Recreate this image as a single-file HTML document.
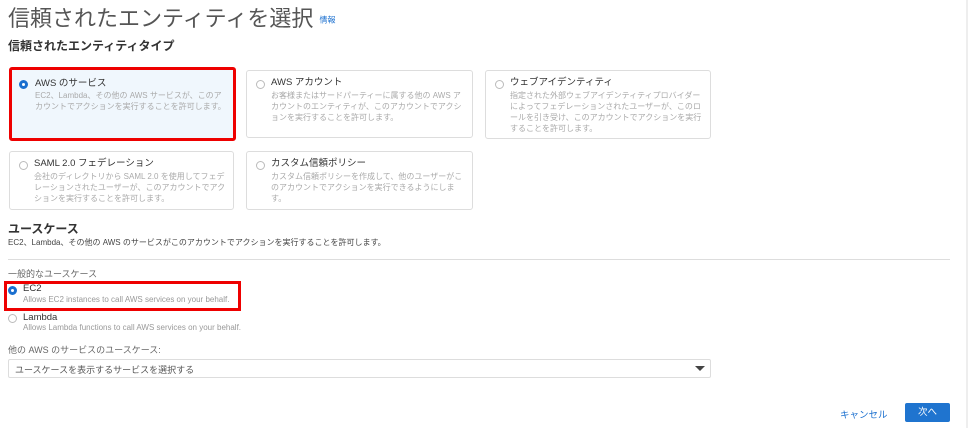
<!DOCTYPE html>
<html><head><meta charset="utf-8"><style>
*{box-sizing:border-box;margin:0;padding:0}
body{width:968px;height:428px;background:#fff;font-family:"Liberation Sans","Noto Sans CJK JP",sans-serif;color:#444;position:relative;overflow:hidden}
.a{position:absolute;white-space:nowrap}
.card{position:absolute;border:1px solid #ddd;border-radius:3px;background:#fff}
.card .r{position:absolute;left:9px;top:9px;width:9px;height:9px;border:1px solid #bbb;border-radius:50%;background:#fff}
.card .t{position:absolute;left:24px;top:6px;font-size:9.5px;line-height:12px;color:#333}
.card .d{position:absolute;left:24px;top:19px;font-size:8px;line-height:11px;color:#aaa;width:192px;white-space:normal}
.sel{border:3px solid #e00;background:#f0f7fd}
.on{border:3px solid #1a6fcf !important;background:#fff}
</style></head><body>
<div class="a" style="left:8px;top:1px;font-size:22px;color:#555">信頼されたエンティティを選択 <span style="font-size:8px;color:#1a6fcf;vertical-align:middle">情報</span></div>
<div class="a" style="left:8px;top:37px;font-size:12px;font-weight:bold;color:#333">信頼されたエンティティタイプ</div>

<div class="card sel" style="left:9px;top:67px;width:227px;height:74px"><div class="r on" style="left:7px;top:10px"></div><div class="t" style="left:23px;top:8px">AWS のサービス</div><div class="d" style="left:23px;top:20px">EC2、Lambda、その他の AWS サービスが、このアカウントでアクションを実行することを許可します。</div></div>
<div class="card" style="left:246px;top:70px;width:227px;height:68px"><div class="r"></div><div class="t">AWS アカウント</div><div class="d">お客様またはサードパーティーに属する他の AWS アカウントのエンティティが、このアカウントでアクションを実行することを許可します。</div></div>
<div class="card" style="left:485px;top:70px;width:226px;height:69px"><div class="r"></div><div class="t">ウェブアイデンティティ</div><div class="d">指定された外部ウェブアイデンティティプロバイダーによってフェデレーションされたユーザーが、このロールを引き受け、このアカウントでアクションを実行することを許可します。</div></div>
<div class="card" style="left:9px;top:151px;width:225px;height:59px"><div class="r"></div><div class="t">SAML 2.0 フェデレーション</div><div class="d">会社のディレクトリから SAML 2.0 を使用してフェデレーションされたユーザーが、このアカウントでアクションを実行することを許可します。</div></div>
<div class="card" style="left:246px;top:151px;width:227px;height:59px"><div class="r"></div><div class="t">カスタム信頼ポリシー</div><div class="d">カスタム信頼ポリシーを作成して、他のユーザーがこのアカウントでアクションを実行できるようにします。</div></div>

<div class="a" style="left:8px;top:220px;font-size:12px;font-weight:bold;color:#333">ユースケース</div>
<div class="a" style="left:8px;top:237px;font-size:8px;color:#444">EC2、Lambda、その他の AWS のサービスがこのアカウントでアクションを実行することを許可します。</div>
<div class="a" style="left:8px;top:259px;width:942px;height:1px;background:#ddd"></div>
<div class="a" style="left:8px;top:267px;font-size:9px;color:#666">一般的なユースケース</div>
<div class="a" style="left:4px;top:281px;width:237px;height:30px;border:3px solid #e00"></div>
<div class="a" style="left:8px;top:286px;width:9px;height:9px;border:3px solid #1a6fcf;border-radius:50%"></div>
<div class="a" style="left:23px;top:283px;font-size:9.5px;color:#333">EC2</div>
<div class="a" style="left:23px;top:295px;font-size:8px;color:#999">Allows EC2 instances to call AWS services on your behalf.</div>
<div class="a" style="left:8px;top:314px;width:9px;height:9px;border:1px solid #bbb;border-radius:50%"></div>
<div class="a" style="left:23px;top:312px;font-size:9.5px;color:#333">Lambda</div>
<div class="a" style="left:23px;top:323px;font-size:8px;color:#999">Allows Lambda functions to call AWS services on your behalf.</div>
<div class="a" style="left:8px;top:343px;font-size:9px;color:#666">他の AWS のサービスのユースケース:</div>
<div class="a" style="left:8px;top:359px;width:703px;height:19px;border:1px solid #ddd;border-radius:2px;font-size:9px;color:#555;padding:3px 0 0 6px">ユースケースを表示するサービスを選択する</div>
<div class="a" style="left:695px;top:366px;width:0;height:0;border-left:5px solid transparent;border-right:5px solid transparent;border-top:5px solid #444"></div>
<div class="a" style="left:840px;top:407px;font-size:9.5px;color:#1a6fcf">キャンセル</div>
<div class="a" style="left:905px;top:403px;width:45px;height:19px;background:#1f74cf;border-radius:2px;color:#fff;font-size:9.5px;text-align:center;line-height:19px">次へ</div>
<div class="a" style="left:966px;top:0;width:2px;height:428px;background:#eee"></div>
</body></html>
